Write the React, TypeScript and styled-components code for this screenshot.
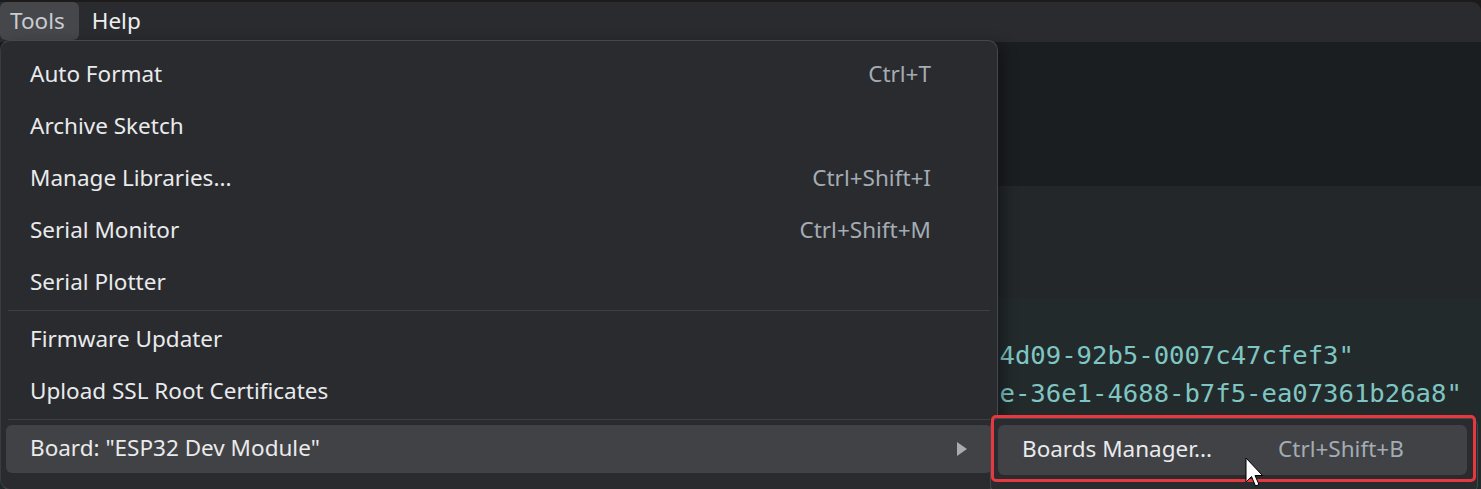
import styled, { createGlobalStyle } from 'styled-components';

const GlobalStyle = createGlobalStyle`
  html, body {
    margin: 0;
    padding: 0;
    background: #1e1a1a;
    overflow: hidden;
  }
  #root {
    width: 1481px;
    height: 489px;
  }
`;

const uiFont = `"Noto Sans", "Open Sans", sans-serif`;

const Window = styled.div`
  position: relative;
  margin-top: 2px;
  width: 1481px;
  height: 487px;
  background: #2a2b2f;
  border-top-right-radius: 9px;
  overflow: hidden;
  display: flex;
  flex-direction: column;
  font-family: ${uiFont};
`;

const MenuBar = styled.div`
  display: flex;
  gap: 3px;
  height: 40px;
  flex-shrink: 0;
`;

const MenuBarItem = styled.div<{ $open?: boolean }>`
  display: flex;
  align-items: center;
  padding: 0 14px 2px 10px;
  height: 36px;
  font-size: 22.5px;
  color: ${(p) => (p.$open ? '#c9ccd0' : '#eceef0')};
  background: ${(p) => (p.$open ? '#46474b' : 'transparent')};
  border-radius: 6px;
`;

const Editor = styled.div`
  flex: 1;
  display: flex;
  flex-direction: column;
`;

const Toolbar = styled.div`
  height: 144px;
  background: #1b1e21;
  flex-shrink: 0;
`;

const Section = styled.div<{ $bg: string; $h?: number }>`
  background: ${(p) => p.$bg};
  ${(p) => (p.$h ? `height: ${p.$h}px; flex-shrink: 0;` : 'flex: 1;')}
`;

const Code = styled.div`
  padding: 38px 0 0 753px;
  font-family: "DejaVu Sans Mono", "Liberation Mono", monospace;
  font-size: 25.6px;
  line-height: 38px;
  color: #7fc6c3;
  white-space: pre;
`;

const Dropdown = styled.div`
  position: absolute;
  left: 0;
  top: 38px;
  width: 998px;
  height: 450px;
  box-sizing: border-box;
  padding-top: 8px;
  background: #2a2b2f;
  border: 1px solid #46474b;
  border-left-color: #3a3b3f;
  border-radius: 10px;
  box-shadow: 6px 4px 14px rgba(0, 0, 0, 0.35);
  display: flex;
  flex-direction: column;
`;

const Item = styled.div<{ $active?: boolean }>`
  display: flex;
  align-items: center;
  box-sizing: border-box;
  height: 48px;
  margin: 2px 5px;
  padding: 0 61px 4px 24px;
  border-radius: 6px;
  background: ${(p) => (p.$active ? '#414245' : 'transparent')};
  font-size: 22.5px;
  color: #e9eaec;
`;

const Label = styled.span`
  flex: 1;
`;

const Shortcut = styled.span`
  color: #a4acb4;
  font-size: 22.5px;
`;

const Arrow = styled.span`
  width: 0;
  height: 0;
  margin: 4px -36px 0 0;
  border-top: 7px solid transparent;
  border-bottom: 7px solid transparent;
  border-left: 10px solid #a9abae;
`;

const Separator = styled.div`
  height: 1px;
  margin: 1px 7px 3px;
  background: #3e3f43;
`;

const Submenu = styled.div`
  position: absolute;
  left: 990px;
  top: 416px;
  width: 488px;
  height: 75px;
  box-sizing: border-box;
  padding: 6px 10px 0 7px;
  background: #2a2b2f;
  border: 1px solid #46474b;
  border-radius: 8px;
`;

const SubItem = styled.div`
  display: flex;
  align-items: center;
  box-sizing: border-box;
  height: 50px;
  padding: 0 56px 3px 24px;
  border-radius: 6px;
  background: #414245;
  font-size: 22.5px;
  color: #e9eaec;
  gap: 66px;
`;

const Highlight = styled.div`
  position: absolute;
  left: 991px;
  top: 413px;
  width: 485px;
  height: 67px;
  box-sizing: border-box;
  border: 3px solid #e5393f;
  border-radius: 5px;
  pointer-events: none;
`;

const Cursor = styled.svg`
  position: absolute;
  left: 1245px;
  top: 455px;
`;

type Entry = { label: string; shortcut?: string } | 'sep';

const entries: Entry[] = [
  { label: 'Auto Format', shortcut: 'Ctrl+T' },
  { label: 'Archive Sketch' },
  { label: 'Manage Libraries...', shortcut: 'Ctrl+Shift+I' },
  { label: 'Serial Monitor', shortcut: 'Ctrl+Shift+M' },
  { label: 'Serial Plotter' },
  'sep',
  { label: 'Firmware Updater' },
  { label: 'Upload SSL Root Certificates' },
  'sep',
];

export default function App() {
  return (
    <>
      <GlobalStyle />
      <Window>
        <MenuBar>
          <MenuBarItem $open>Tools</MenuBarItem>
          <MenuBarItem>Help</MenuBarItem>
        </MenuBar>
        <Editor>
          <Toolbar />
          <Section $bg="#232729" $h={112} />
          <Section $bg="#232a2c">
            <Code>
              {'"id": "6f1c2a9b-4d09-92b5-0007c47cfef3"\n'}
              {'"sn": "193a8d1b3e-36e1-4688-b7f5-ea07361b26a8"'}
            </Code>
          </Section>
        </Editor>

        <Dropdown>
          {entries.map((e, i) =>
            e === 'sep' ? (
              <Separator key={i} />
            ) : (
              <Item key={i}>
                <Label>{e.label}</Label>
                {e.shortcut && <Shortcut>{e.shortcut}</Shortcut>}
              </Item>
            )
          )}
          <Item $active>
            <Label>Board: "ESP32 Dev Module"</Label>
            <Arrow />
          </Item>
        </Dropdown>

        <Submenu>
          <SubItem>
            <span>Boards Manager...</span>
            <Shortcut>Ctrl+Shift+B</Shortcut>
          </SubItem>
        </Submenu>
        <Highlight />

        <Cursor width="24" height="36" viewBox="0 0 24 36">
          <path
            d="M1 1 L1 25 L6.5 19.5 L10.5 29 L14 27.5 L10 18.5 L17.5 18.5 Z"
            fill="#ffffff"
            stroke="#000000"
            strokeWidth="1"
            strokeLinejoin="miter"
          />
        </Cursor>
      </Window>
    </>
  );
}
